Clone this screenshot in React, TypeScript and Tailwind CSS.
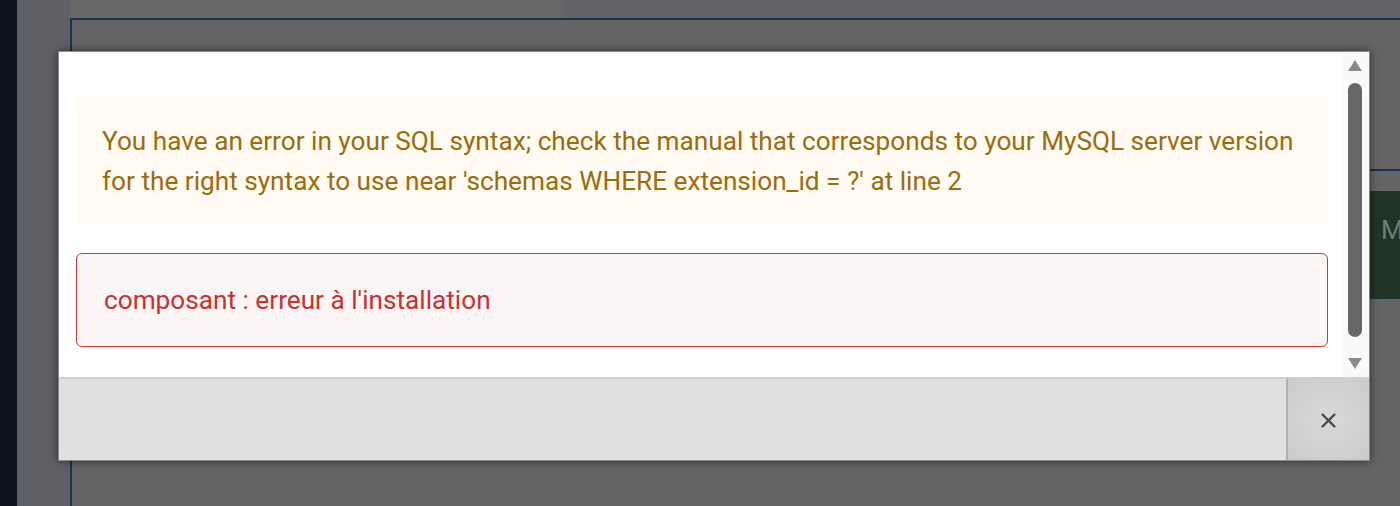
function App() {
  return (
    <div className="relative flex h-[506px] w-[1400px] overflow-hidden bg-[#646464] font-['Roboto',sans-serif]">
      {/* page behind the overlay */}
      <div className="h-full w-[17px] bg-[#0b121c]" />
      <div className="h-full w-[53px] bg-[#5f6065]" />
      <div className="flex h-full flex-1 flex-col">
        <div className="flex h-[18px]">
          <div className="w-[494px] bg-[#666666]" />
          <div className="flex-1 bg-[#616266]" />
        </div>
        <div className="flex flex-1 flex-col items-end border-l-2 border-t-2 border-[#1a3350] bg-[#646464]">
          <div className="mt-[149px] w-[31px] border-t-2 border-[#1a3350]" />
          <div className="mt-[20px] flex h-[108px] w-[31px] items-start overflow-hidden bg-[#1f3526] pl-[12px] pt-[20px] text-[26px] text-[#6f7d73]">
            M
          </div>
        </div>
      </div>

      {/* modal */}
      <div className="absolute left-[58px] top-[51px] flex h-[410px] w-[1312px] flex-col border border-[#8a8a8a] bg-white shadow-[0_0_8px_rgba(0,0,0,0.55)]">
        <div className="flex h-[325px]">
          <div className="flex flex-1 flex-col gap-[28px] pl-[17px] pr-[15px] pt-[43px]">
            <div className="rounded-md bg-[#fffbf2] px-[26px] pb-[24px] pt-[26px] text-[26.2px] leading-[40px] text-[#9b6c0c]">
              You have an error in your SQL syntax; check the manual that corresponds to your MySQL server version
              for the right syntax to use near 'schemas WHERE extension_id = ?' at line 2
            </div>
            <div className="flex h-[94px] items-center rounded-md border border-[#d33434] bg-[#fdf6f6] pl-[27px] pt-[2px] text-[26.2px] text-[#cb2f2f]">
              composant : erreur à l'installation
            </div>
          </div>
          <div className="flex w-[26px] flex-col items-center bg-[#fafafa] pr-[2px] pt-[8px]">
            <div className="h-0 w-0 border-x-[7px] border-b-[11px] border-x-transparent border-b-[#8a8a8a]" />
            <div className="mt-[12px] h-[254px] w-[14px] rounded-full bg-[#666666]" />
            <div className="mt-[21px] h-0 w-0 border-x-[7px] border-t-[11px] border-x-transparent border-t-[#8a8a8a]" />
          </div>
        </div>
        <div className="flex flex-1 border-t-2 border-[#cfcfcf] bg-[#e0e0e0]">
          <div className="flex-1" />
          <button className="flex w-[83px] items-center justify-center border-l-2 border-[#b0b0b0] bg-[radial-gradient(circle,#d9d9d9,#cbcbcb)] pt-[2px]">
            <svg width="17" height="17" viewBox="0 0 17 17" fill="none" stroke="#4a4a4a" strokeWidth="2.4" strokeLinecap="round">
              <path d="M2.5 2.5 L14.5 14.5 M14.5 2.5 L2.5 14.5" />
            </svg>
          </button>
        </div>
      </div>
    </div>
  );
}

export default App;
